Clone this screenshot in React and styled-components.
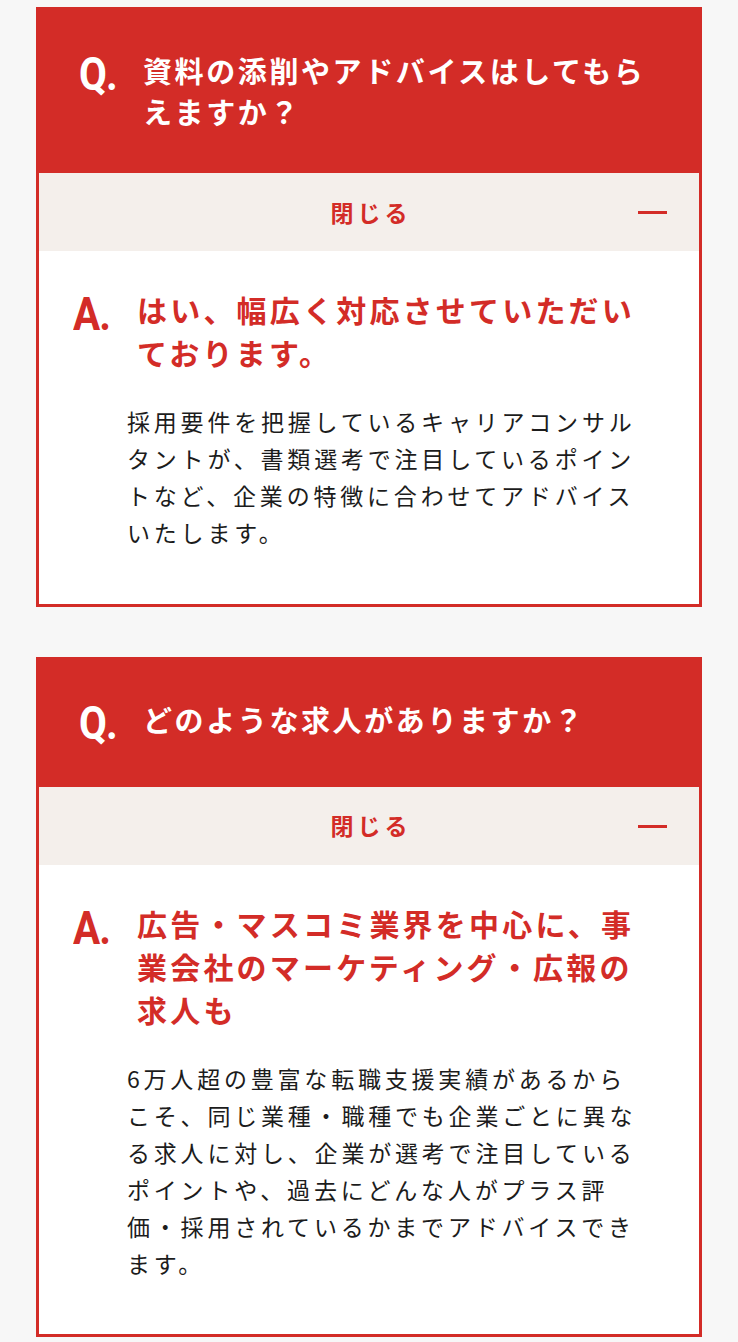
import React from "react";
import styled, { createGlobalStyle } from "styled-components";

const RED = "#d32c27";

const GlobalStyle = createGlobalStyle`
  html, body {
    margin: 0;
    padding: 0;
    background: #f7f7f7;
  }
  body {
    font-family: "Noto Sans CJK JP", "Noto Sans", sans-serif;
    -webkit-font-smoothing: antialiased;
  }
  * { box-sizing: border-box; }
`;

const Page = styled.main`
  display: flex;
  flex-direction: column;
  gap: 50px;
  padding: 7px 36px 4px;
`;

const Card = styled.section`
  border: 3px solid ${RED};
  background: #fff;
  display: flex;
  flex-direction: column;
`;

const Question = styled.div`
  display: flex;
  align-items: flex-start;
  background: ${RED};
  padding: 39.5px 39px 41.5px 40px;
`;

const Mark = styled.span`
  flex: 0 0 64px;
  display: block;
  height: 46px;
  padding-top: ${(p) => p.$offset}px;
  font-family: Roboto, "Liberation Sans", sans-serif;
  font-weight: 700;
  font-size: 47px;
  line-height: 44px;
  color: ${(p) => p.$color};

  & > span {
    display: inline-block;
    transform: scaleX(0.86);
    transform-origin: left center;
    letter-spacing: -1px;
  }
`;

const QuestionText = styled.h2`
  flex: 1;
  margin: 0;
  font-size: 29px;
  line-height: 41px;
  font-weight: 700;
  letter-spacing: 2.6px;
  color: #fff;
`;

const Toggle = styled.button`
  display: grid;
  grid-template-columns: 1fr auto 1fr;
  align-items: center;
  height: 78px;
  width: 100%;
  border: 0;
  margin: 0;
  padding: 0 32px;
  background: #f4efeb;
  cursor: pointer;
  font-family: "Noto Sans CJK JP", sans-serif;
`;

const ToggleLabel = styled.span`
  grid-column: 2;
  font-size: 23px;
  font-weight: 700;
  letter-spacing: 4px;
  margin-right: -4px;
  color: ${RED};
  line-height: 1;
`;

const MinusIcon = styled.span`
  grid-column: 3;
  justify-self: end;
  width: 29px;
  height: 3px;
  background: ${RED};
  margin-top: 1px;
`;

const Answer = styled.div`
  display: flex;
  flex-direction: column;
  gap: 29px;
  padding: 37px 44px 52.7px 34px;
`;

const AnswerHead = styled.div`
  display: flex;
  align-items: flex-start;
`;

const AnswerTitle = styled.h3`
  flex: 1;
  margin: 0;
  font-size: 30px;
  line-height: 43px;
  font-weight: 700;
  letter-spacing: 3.2px;
  color: ${RED};
`;

const AnswerBody = styled.p`
  margin: 0;
  padding: 0 10px 0 54px;
  font-size: 23px;
  line-height: 37px;
  font-weight: 400;
  letter-spacing: 3.8px;
  color: #1c1c1c;
`;

const faqs = [
  {
    q: "資料の添削やアドバイスはしてもらえますか？",
    a: "はい、幅広く対応させていただいております。",
    body:
      "採用要件を把握しているキャリアコンサルタントが、書類選考で注目しているポイントなど、企業の特徴に合わせてアドバイスいたします。",
  },
  {
    q: "どのような求人がありますか？",
    a: "広告・マスコミ業界を中心に、事業会社のマーケティング・広報の求人も",
    body:
      "6万人超の豊富な転職支援実績があるからこそ、同じ業種・職種でも企業ごとに異なる求人に対し、企業が選考で注目しているポイントや、過去にどんな人がプラス評価・採用されているかまでアドバイスできます。",
  },
];

function FaqItem({ item }) {
  return (
    <Card>
      <Question>
        <Mark $color="#fff" $offset={2}>
          <span>Q.</span>
        </Mark>
        <QuestionText>{item.q}</QuestionText>
      </Question>
      <Toggle type="button">
        <ToggleLabel>閉じる</ToggleLabel>
        <MinusIcon aria-hidden="true" />
      </Toggle>
      <Answer>
        <AnswerHead>
          <Mark $color={RED} $offset={4}>
            <span>A.</span>
          </Mark>
          <AnswerTitle>{item.a}</AnswerTitle>
        </AnswerHead>
        <AnswerBody>{item.body}</AnswerBody>
      </Answer>
    </Card>
  );
}

export default function App() {
  return (
    <>
      <GlobalStyle />
      <Page>
        {faqs.map((f, i) => (
          <FaqItem key={i} item={f} />
        ))}
      </Page>
    </>
  );
}
